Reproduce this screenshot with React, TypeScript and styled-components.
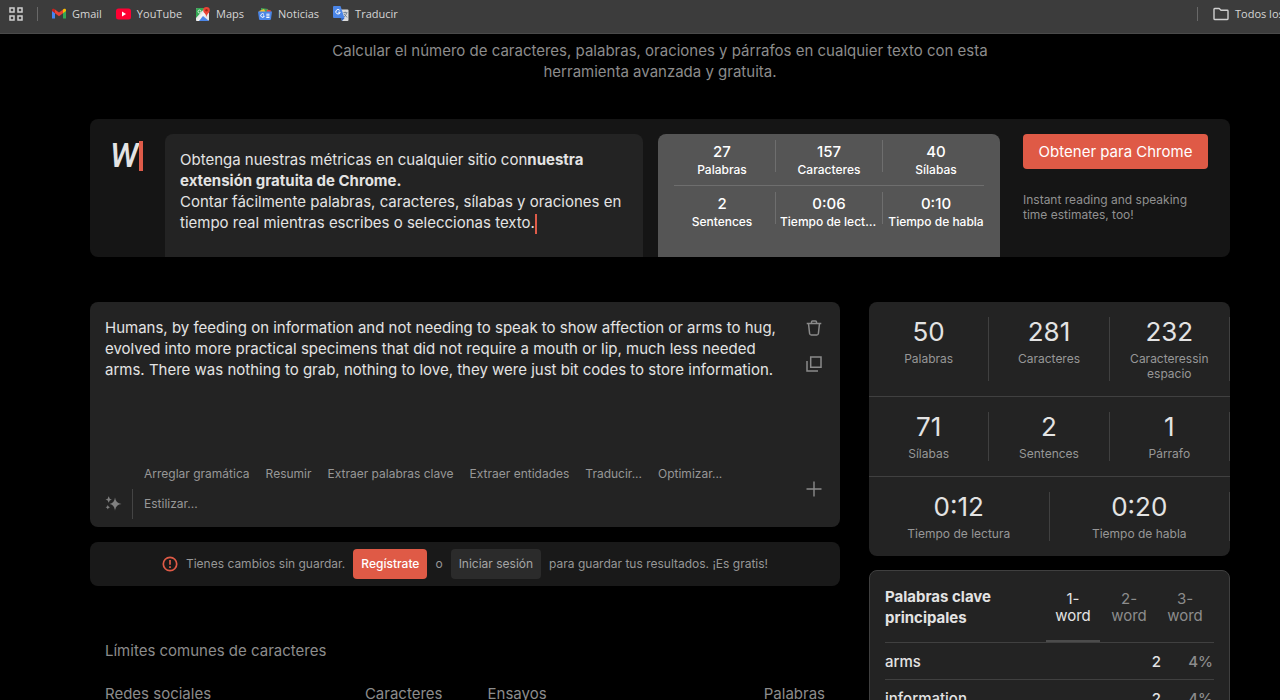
import React, { useState } from 'react';
import styled, { createGlobalStyle } from 'styled-components';

const GlobalStyle = createGlobalStyle`
  *, *::before, *::after { box-sizing: border-box; }
  body {
    margin: 0;
    background: #000;
    color: #e3e3e3;
    font-family: Inter, "Liberation Sans", sans-serif;
    font-size: 15px;
    line-height: 21px;
  }
  button, textarea { font: inherit; color: inherit; }
  button { cursor: pointer; border: 0; background: none; padding: 0; }
  a { color: inherit; text-decoration: none; }
  h2, p { margin: 0; }
  svg { flex: none; }
`;

const Shell = styled.div`
  display: flex;
  flex-direction: column;
  height: 100vh;
`;

const BookmarksBar = styled.nav`
  display: flex;
  align-items: center;
  flex: none;
  height: 34px;
  padding: 0 0 6px 8px;
  border-bottom: 1px solid #4a4a4a;
  background: #3c3c3c;
  color: #d6d6d6;
  font-family: "Open Sans", "Noto Sans", sans-serif;
  font-size: 11px;
  line-height: 16px;
  white-space: nowrap;
  overflow: hidden;
`;

const BarDivider = styled.span`
  width: 1px;
  height: 14px;
  background: #686868;
`;

const BookmarkList = styled.div`
  display: flex;
  flex: 1;
  gap: 14px;
  padding-left: 14px;
`;

const Bookmark = styled.a`
  display: flex;
  align-items: center;
  gap: 6px;
`;

const AppsButton = styled.button`
  display: flex;
  margin-right: 13px;
`;

const AllBookmarks = styled.a`
  display: flex;
  align-items: center;
  gap: 6px;
  width: 82px;
  padding-left: 15px;
`;

const Page = styled.main`
  flex: 1;
  min-height: 0;
  overflow-y: auto;
  scrollbar-width: none;
  padding: 6px 50px 0 90px;
`;

const Intro = styled.p`
  max-width: 690px;
  margin: 0 auto 37px;
  color: #8c8c8c;
  text-align: center;
`;

const Promo = styled.section`
  display: grid;
  grid-template-columns: 75px minmax(0, 478fr) minmax(0, 357fr) minmax(0, 230fr);
  margin-bottom: 45px;
  padding-top: 15px;
  border-radius: 8px;
  background: #151515;
  overflow: hidden;
`;

const Logo = styled.div`
  display: flex;
  gap: 1px;
  height: 45px;
  padding: 7px 0 0 20px;
  font-family: Roboto, sans-serif;
  font-size: 33px;
  font-style: italic;
  font-weight: 500;
  line-height: 30px;
`;

const LogoCaret = styled.span`
  width: 4px;
  height: 30px;
  background: #de5b49;
`;

const PromoText = styled.div`
  padding: 15px 15px 23px;
  border-radius: 8px 8px 0 0;
  background: #232323;
`;

const TextCaret = styled.span`
  display: inline-block;
  width: 2px;
  height: 20px;
  background: #de5b49;
  vertical-align: middle;
`;

const Metrics = styled.div`
  margin-left: 15px;
  padding: 0 11px;
  border-radius: 8px 8px 0 0;
  background: #555;
  color: #fff;
  font-size: 12px;
  font-weight: 500;
  line-height: 18px;
`;

const MetricsRow = styled.div`
  display: flex;
  height: 51px;
`;

const MetricsLine = styled.hr`
  height: 1px;
  margin: 0 5px;
  border: 0;
  background: #6e6e6e;
`;

const Metric = styled.div`
  flex: 1 1 0;
  min-width: 0;
  padding: 9px 4px 0;
  text-align: center;
`;

const MetricLabel = styled.div`
  overflow: hidden;
  text-overflow: ellipsis;
  white-space: nowrap;
`;

const MetricValue = styled.div`
  font-size: 15px;
`;

const MetricDivider = styled.span`
  width: 1px;
  height: 32px;
  margin-top: 6px;
  background: #6e6e6e;
`;

const PromoAction = styled.div`
  padding: 0 22px 0 23px;
  color: #919191;
  font-size: 12px;
  line-height: 15px;
`;

const ChromeButton = styled.button`
  width: 100%;
  height: 35px;
  margin-bottom: 23px;
  border-radius: 4px;
  background: #df5a46;
  color: #fff;
  font-size: 15px;
`;

const Columns = styled.div`
  display: grid;
  grid-template-columns: 750fr 361fr;
  gap: 29px;
  align-items: start;
`;

const Editor = styled.section`
  display: flex;
  flex-direction: column;
  height: 225px;
  padding: 15px 15px 8px;
  border-radius: 8px;
  background: #232323;
`;

const EditorTop = styled.div`
  display: flex;
  flex: 1;
  justify-content: space-between;
`;

const TextInput = styled.textarea`
  flex: 1;
  max-width: 684px;
  padding: 0;
  border: 0;
  outline: 0;
  background: none;
  resize: none;
`;

const IconStack = styled.div`
  display: flex;
  flex-direction: column;
  gap: 16px;
  padding: 1px 0;
`;

const IconButton = styled.button`
  display: flex;
  align-items: center;
  justify-content: center;
  width: 22px;
  height: 20px;
  color: #8a8a8a;
`;

const EditorBottom = styled.div`
  display: flex;
  align-items: center;
`;

const AiIcon = styled.span`
  display: flex;
  align-self: flex-end;
  align-items: center;
  width: 28px;
  height: 30px;
  border-right: 1px solid #444;
  color: #808080;
`;

const Prompts = styled.div`
  display: flex;
  flex: 1;
  flex-wrap: wrap;
  column-gap: 16px;
  padding: 0 60px 0 11px;
`;

const Prompt = styled.button`
  color: #979797;
  font-size: 12px;
  line-height: 30px;
`;

const SaveBar = styled.div`
  display: flex;
  align-items: center;
  justify-content: center;
  gap: 8px;
  height: 44px;
  margin: 15px 0 54px;
  border-radius: 8px;
  background: #191919;
  color: #979797;
  font-size: 12px;
`;

const SaveButton = styled.button<{ $primary?: boolean }>`
  height: 30px;
  padding: 0 8px;
  border-radius: 4px;
  background: ${(p) => (p.$primary ? '#df5a46' : '#2b2b2b')};
  color: ${(p) => (p.$primary ? '#fff' : '#a5a5a5')};
  font-weight: ${(p) => (p.$primary ? 500 : 400)};
`;

const Limits = styled.section`
  padding: 0 15px;
  color: #8c8c8c;
`;

const LimitsTitle = styled.h2`
  margin-bottom: 22px;
  font-size: 15px;
  font-weight: 400;
`;

const LimitTables = styled.div`
  display: grid;
  grid-template-columns: 1fr 1fr;
  gap: 45px;
`;

const LimitTable = styled.table`
  width: 100%;
  border-collapse: collapse;

  th { padding: 0; font-weight: 400; text-align: left; }
  th:last-child { text-align: right; }
`;

const Stats = styled.section`
  margin-bottom: 14px;
  border-radius: 8px;
  background: #232323;
  overflow: hidden;
`;

const StatsRow = styled.div`
  display: flex;
  padding: 15px 0;

  & + & { border-top: 1px solid #404040; }
`;

const Stat = styled.div`
  flex: 1 1 0;
  padding: 0 10px;
  border-right: 1px solid #404040;
  color: #979797;
  font-size: 12px;
  line-height: 15px;
  text-align: center;
`;

const StatValue = styled.div`
  margin-bottom: 4px;
  color: #e3e3e3;
  font-size: 26px;
  line-height: 30px;
`;

const Keywords = styled.section`
  padding: 15px;
  border: 1px solid #3f3f3f;
  border-radius: 8px;
  background: #232323;
`;

const KeywordsHeader = styled.div`
  display: flex;
  justify-content: space-between;
  border-bottom: 1px solid #404040;
`;

const KeywordsTitle = styled.h2`
  width: 130px;
  font-size: 15px;
  font-weight: 700;
`;

const Tabs = styled.div`
  display: flex;
  gap: 2px;
  padding-right: 2px;
`;

const Tab = styled.button<{ $active: boolean }>`
  width: 54px;
  padding: 4px 5px 16px;
  border-bottom: 2px solid ${(p) => (p.$active ? '#4c4c4c' : 'transparent')};
  color: ${(p) => (p.$active ? '#e3e3e3' : '#8c8c8c')};
  line-height: 17px;
`;

const KeywordTable = styled.table`
  width: 100%;
  border-collapse: collapse;

  tr { border-bottom: 1px solid #404040; }
  th, td { padding: 8px 0 7px; text-align: left; font-weight: 500; }
  td { width: 52px; padding-right: 1px; text-align: right; }
  td:last-child { color: #8c8c8c; }
`;

const GmailIcon = () => (
  <svg width="14" height="14" viewBox="0 0 14 14" aria-hidden="true">
    <path d="M0 3.5v8h3V6z" fill="#4285f4" />
    <path d="M14 3.5v8h-3V6z" fill="#34a853" />
    <path d="M0 3.6V3c0-1.200 1.400-1.600 2.300-1L3 2.600V6.200L0 4z" fill="#c5221f" />
    <path d="M14 3.600V3c0-1.200-1.400-1.600-2.300-1L11 2.600V6.200L14 4z" fill="#fbbc04" />
    <path d="M3 2.500l4 3 4-3v3.700l-4 3-4-3z" fill="#ea4335" />
  </svg>
);

const YouTubeIcon = () => (
  <svg width="15" height="14" viewBox="0 0 15 14" aria-hidden="true">
    <rect y="1.5" width="15" height="11" rx="2.5" fill="#f03" />
    <path d="M6 4.6v4.800L10 7z" fill="#fff" />
  </svg>
);

const MapsIcon = () => (
  <svg width="14" height="14" viewBox="0 0 14 14" aria-hidden="true">
    <rect y="1" width="13" height="13" rx="1.5" fill="#e8e8e8" />
    <path d="M0 2.5A1.500 1.500 0 0 1 1.500 1H9L0 11z" fill="#34a853" />
    <path d="M0 14L10 3l2 2-9 9z" fill="#f3f3f3" />
    <path d="M7 9l6 5H3z" fill="#4b86e8" />
    <circle cx="3.5" cy="4.5" r="1.5" fill="none" stroke="#d9f2df" />
    <path d="M10.500 0A3.300 3.300 0 0 0 7.200 3.300C7.200 6 10 6.500 10.500 10c.500-3.500 3.300-4 3.300-6.700A3.300 3.300 0 0 0 10.500 0z" fill="#ea4335" />
    <circle cx="10.5" cy="3.3" r="1.2" fill="#a52714" />
  </svg>
);

const NewsIcon = () => (
  <svg width="14" height="14" viewBox="0 0 14 14" aria-hidden="true">
    <path d="M3 1l7 1-.500 5H3z" fill="#3fa65a" />
    <path d="M9 2.500l4 1-1 4H8z" fill="#e5473a" />
    <path d="M1 4l5-2 2 4H2z" fill="#f6c02c" />
    <path d="M0 4.500h14L13 12q-.200 1-1 1H2q-.800 0-1-1z" fill="#4b86e8" />
    <path d="M6 7.400a1.800 1.800 0 1 0 .300 1.600H5M8.300 7.200h3.200M8.300 8.900h3.200M8.300 10.500h3.200" fill="none" stroke="#fff" strokeWidth="1" />
  </svg>
);

const TranslateIcon = () => (
  <svg width="16" height="15" viewBox="0 0 16 15" aria-hidden="true">
    <path d="M6 3.500h8.500q1 0 1 1V14q0 1-1 1H9z" fill="#dcdcdc" />
    <path d="M1 0h6.500l4 12H1q-1 0-1-1V1q0-1 1-1z" fill="#4b86e8" />
    <path d="M7.600 12h4L9 15z" fill="#3267c5" />
    <path d="M6.700 4.300a2.200 2.200 0 1 0 .500 1.900H5.200" fill="none" stroke="#fff" strokeWidth="1" />
    <path d="M10.300 6.700h4.200M12.200 5.700v1M13.600 6.900c-.400 2-1.500 3.200-2.600 4M11.200 8l2.800 3.400" fill="none" stroke="#66798f" strokeWidth=".9" />
  </svg>
);

const AppsIcon = () => (
  <svg width="16" height="16" viewBox="0 0 16 16" fill="none" stroke="#cfcfcf" strokeWidth="1.5" aria-hidden="true">
    <path d="M2 2h4v4H2zM10 2h4v4h-4zM2 10h4v4H2zM10 10h4v4h-4z" />
  </svg>
);

const FolderIcon = () => (
  <svg width="16" height="14" viewBox="0 0 16 14" fill="none" stroke="#cfcfcf" strokeWidth="1.4" strokeLinejoin="round" aria-hidden="true">
    <path d="M1 2.200q0-.700.700-.700h4.500L8 3.300h6.300q.700 0 .7.700v7.800q0 .700-.7.700H1.700q-.700 0-.7-.700z" />
  </svg>
);

const TrashIcon = () => (
  <svg width="16" height="16" viewBox="0 0 16 16" fill="none" stroke="currentColor" strokeWidth="1.5" aria-hidden="true">
    <path d="M.7 3.500h14.600M5.500 3.500V2q0-1 1-1h3q1 0 1 1v1.500M2.500 3.500l1.100 10q.200 1.500 1.600 1.500h5.600q1.400 0 1.600-1.500l1.100-10" />
  </svg>
);

const CopyIcon = () => (
  <svg width="16" height="16" viewBox="0 0 16 16" fill="none" stroke="currentColor" strokeWidth="1.5" aria-hidden="true">
    <path d="M4.700 1h10.300v10.300H4.700zM1 5v10h11" />
  </svg>
);

const PlusIcon = () => (
  <svg width="16" height="16" viewBox="0 0 16 16" fill="none" stroke="currentColor" strokeWidth="1.4" aria-hidden="true">
    <path d="M8 .5v15M.5 8h15" />
  </svg>
);

const SparkleIcon = () => (
  <svg width="17" height="16" viewBox="0 0 17 16" fill="currentColor" aria-hidden="true">
    <path d="M10 1.500q.700 5.800 6.500 6.500-5.800.700-6.500 6.800Q9.300 8.700 4.500 8 9.300 7.300 10 1.500z" />
    <path d="M3.700.300q.400 2.900 3.200 3.300-2.800.400-3.200 3.200-.400-2.800-3.200-3.200 2.800-.400 3.200-3.300z" />
    <path d="M2.800 9q.300 2 2.200 2.300-1.900.300-2.200 2.200-.300-1.900-2.200-2.200Q2.500 11 2.800 9z" />
  </svg>
);

const AlertIcon = () => (
  <svg width="16" height="16" viewBox="0 0 16 16" fill="none" stroke="#df5a46" aria-hidden="true">
    <circle cx="8" cy="8" r="6.7" strokeWidth="1.7" />
    <path d="M8 4v4.800M8 10.300V12" strokeWidth="1.7" />
  </svg>
);

const bookmarks = [
  { name: 'Gmail', icon: <GmailIcon /> },
  { name: 'YouTube', icon: <YouTubeIcon /> },
  { name: 'Maps', icon: <MapsIcon /> },
  { name: 'Noticias', icon: <NewsIcon /> },
  { name: 'Traducir', icon: <TranslateIcon /> },
];

const promoMetrics = [
  [['27', 'Palabras'], ['157', 'Caracteres'], ['40', 'Sílabas']],
  [['2', 'Sentences'], ['0:06', 'Tiempo de lectura'], ['0:10', 'Tiempo de habla']],
];

const stats = [
  [['50', 'Palabras'], ['281', 'Caracteres'], ['232', 'Caracteressin espacio']],
  [['71', 'Sílabas'], ['2', 'Sentences'], ['1', 'Párrafo']],
  [['0:12', 'Tiempo de lectura'], ['0:20', 'Tiempo de habla']],
];

const prompts = [
  'Arreglar gramática', 'Resumir', 'Extraer palabras clave', 'Extraer entidades',
  'Traducir...', 'Optimizar...', 'Estilizar...',
];

const keywords = [['arms', '2', '4%'], ['information', '2', '4%']];

const initialText =
  'Humans, by feeding on information and not needing to speak to show affection or arms to hug, evolved into more practical specimens that did not require a mouth or lip, much less needed arms. There was nothing to grab, nothing to love, they were just bit codes to store information.';

export default function App() {
  const [text, setText] = useState(initialText);
  const [tab, setTab] = useState(1);

  return (
    <Shell>
      <GlobalStyle />
      <BookmarksBar>
        <AppsButton aria-label="Aplicaciones"><AppsIcon /></AppsButton>
        <BarDivider />
        <BookmarkList>
          {bookmarks.map((b) => (
            <Bookmark href="#" key={b.name}>{b.icon}{b.name}</Bookmark>
          ))}
        </BookmarkList>
        <BarDivider />
        <AllBookmarks href="#"><FolderIcon />Todos los</AllBookmarks>
      </BookmarksBar>

      <Page>
        <Intro>
          Calcular el número de caracteres, palabras, oraciones y párrafos en cualquier texto con esta
          herramienta avanzada y gratuita.
        </Intro>

        <Promo>
          <Logo>W<LogoCaret /></Logo>
          <PromoText>
            <p>Obtenga nuestras métricas en cualquier sitio con<b>nuestra extensión gratuita de Chrome.</b></p>
            <p>
              Contar fácilmente palabras, caracteres, sílabas y oraciones en tiempo real mientras
              escribes o seleccionas texto.<TextCaret />
            </p>
          </PromoText>
          <Metrics>
            {promoMetrics.map((row, r) => (
              <React.Fragment key={r}>
                {r > 0 && <MetricsLine />}
                <MetricsRow>
                  {row.map(([value, label], i) => (
                    <React.Fragment key={label}>
                      {i > 0 && <MetricDivider />}
                      <Metric>
                        <MetricValue>{value}</MetricValue>
                        <MetricLabel>{label}</MetricLabel>
                      </Metric>
                    </React.Fragment>
                  ))}
                </MetricsRow>
              </React.Fragment>
            ))}
          </Metrics>
          <PromoAction>
            <ChromeButton>Obtener para Chrome</ChromeButton>
            <p>Instant reading and speaking time estimates, too!</p>
          </PromoAction>
        </Promo>

        <Columns>
          <div>
            <Editor>
              <EditorTop>
                <TextInput
                  aria-label="Texto"
                  spellCheck={false}
                  value={text}
                  onChange={(e) => setText(e.target.value)}
                />
                <IconStack>
                  <IconButton aria-label="Borrar"><TrashIcon /></IconButton>
                  <IconButton aria-label="Copiar"><CopyIcon /></IconButton>
                </IconStack>
              </EditorTop>
              <EditorBottom>
                <AiIcon><SparkleIcon /></AiIcon>
                <Prompts>
                  {prompts.map((p) => <Prompt key={p}>{p}</Prompt>)}
                </Prompts>
                <IconButton aria-label="Añadir"><PlusIcon /></IconButton>
              </EditorBottom>
            </Editor>

            <SaveBar>
              <AlertIcon />
              <span>Tienes cambios sin guardar.</span>
              <SaveButton $primary>Regístrate</SaveButton>
              <span>o</span>
              <SaveButton>Iniciar sesión</SaveButton>
              <span>para guardar tus resultados. ¡Es gratis!</span>
            </SaveBar>

            <Limits>
              <LimitsTitle>Límites comunes de caracteres</LimitsTitle>
              <LimitTables>
                <LimitTable>
                  <thead><tr><th scope="col">Redes sociales</th><th scope="col">Caracteres</th></tr></thead>
                </LimitTable>
                <LimitTable>
                  <thead><tr><th scope="col">Ensayos</th><th scope="col">Palabras</th></tr></thead>
                </LimitTable>
              </LimitTables>
            </Limits>
          </div>

          <aside>
            <Stats>
              {stats.map((row, r) => (
                <StatsRow key={r}>
                  {row.map(([value, label]) => (
                    <Stat key={label}>
                      <StatValue>{value}</StatValue>
                      {label}
                    </Stat>
                  ))}
                </StatsRow>
              ))}
            </Stats>

            <Keywords>
              <KeywordsHeader>
                <KeywordsTitle>Palabras clave principales</KeywordsTitle>
                <Tabs role="tablist">
                  {[1, 2, 3].map((n) => (
                    <Tab key={n} role="tab" aria-selected={tab === n} $active={tab === n} onClick={() => setTab(n)}>
                      {n}-word
                    </Tab>
                  ))}
                </Tabs>
              </KeywordsHeader>
              <KeywordTable>
                <tbody>
                  {keywords.map(([word, count, share]) => (
                    <tr key={word}><th scope="row">{word}</th><td>{count}</td><td>{share}</td></tr>
                  ))}
                </tbody>
              </KeywordTable>
            </Keywords>
          </aside>
        </Columns>
      </Page>
    </Shell>
  );
}
